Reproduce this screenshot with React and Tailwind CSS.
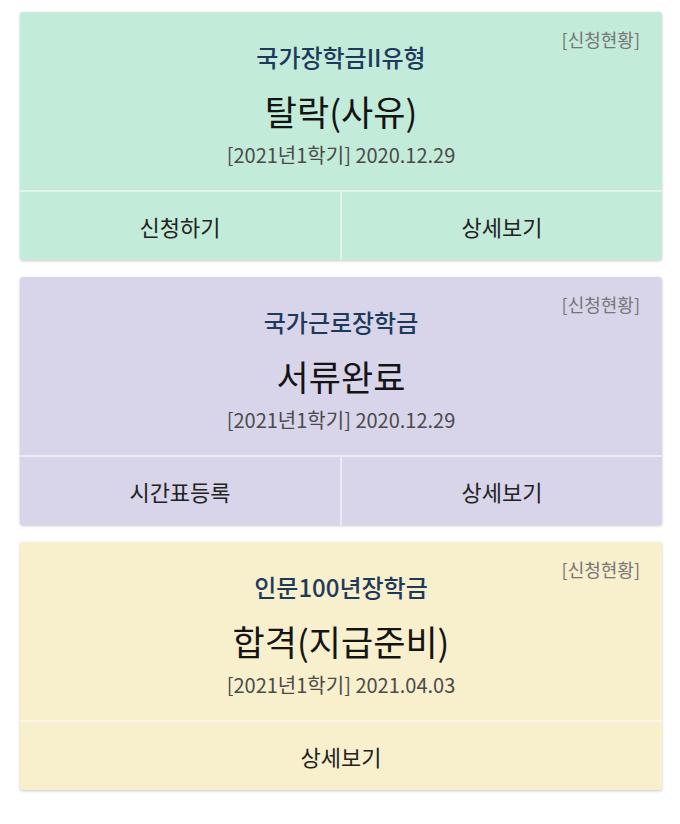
import React from "react";

const cards = [
  {
    bg: "bg-[#c3ebd9]",
    title: "국가장학금II유형",
    status: "탈락(사유)",
    date: "[2021년1학기] 2020.12.29",
    buttons: ["신청하기", "상세보기"],
  },
  {
    bg: "bg-[#d8d5ea]",
    title: "국가근로장학금",
    status: "서류완료",
    date: "[2021년1학기] 2020.12.29",
    buttons: ["시간표등록", "상세보기"],
  },
  {
    bg: "bg-[#f8efcd]",
    title: "인문100년장학금",
    status: "합격(지급준비)",
    date: "[2021년1학기] 2021.04.03",
    buttons: ["상세보기"],
  },
];

function Card({ card }) {
  return (
    <div className={`${card.bg} rounded-[3px] shadow-[0_1px_3px_rgba(0,0,0,0.22)] overflow-hidden`}>
      {/* 상단 정보 */}
      <div className="relative h-[178px] flex flex-col items-center pt-[29px]">
        <span className="absolute right-[22px] top-[15px] text-[18px] leading-[24px] text-[#767676]">
          [신청현황]
        </span>
        <p className="text-[24px] leading-[32px] font-medium text-[#1d3a5c]">{card.title}</p>
        <p className="mt-[15px] text-[35px] leading-[46px] text-[#141414]">{card.status}</p>
        <p className="mt-[8px] text-[20px] leading-[26px] text-[#4a4a4a]">{card.date}</p>
      </div>
      {/* 버튼 */}
      <div className="flex h-[70px] border-t-2 border-white/50">
        {card.buttons.map((b, i) => (
          <button
            key={i}
            className={`flex-1 flex items-center justify-center text-[22px] text-[#222] ${
              i > 0 ? "border-l-2 border-white/50" : ""
            }`}
          >
            {b}
          </button>
        ))}
      </div>
    </div>
  );
}

export default function App() {
  return (
    <div
      className="min-h-screen bg-white pt-3 pl-5 pr-[18px] flex flex-col gap-[17px]"
      style={{ fontFamily: '"Noto Sans CJK KR", "Noto Sans", sans-serif' }}
    >
      {cards.map((c, i) => (
        <Card key={i} card={c} />
      ))}
    </div>
  );
}
